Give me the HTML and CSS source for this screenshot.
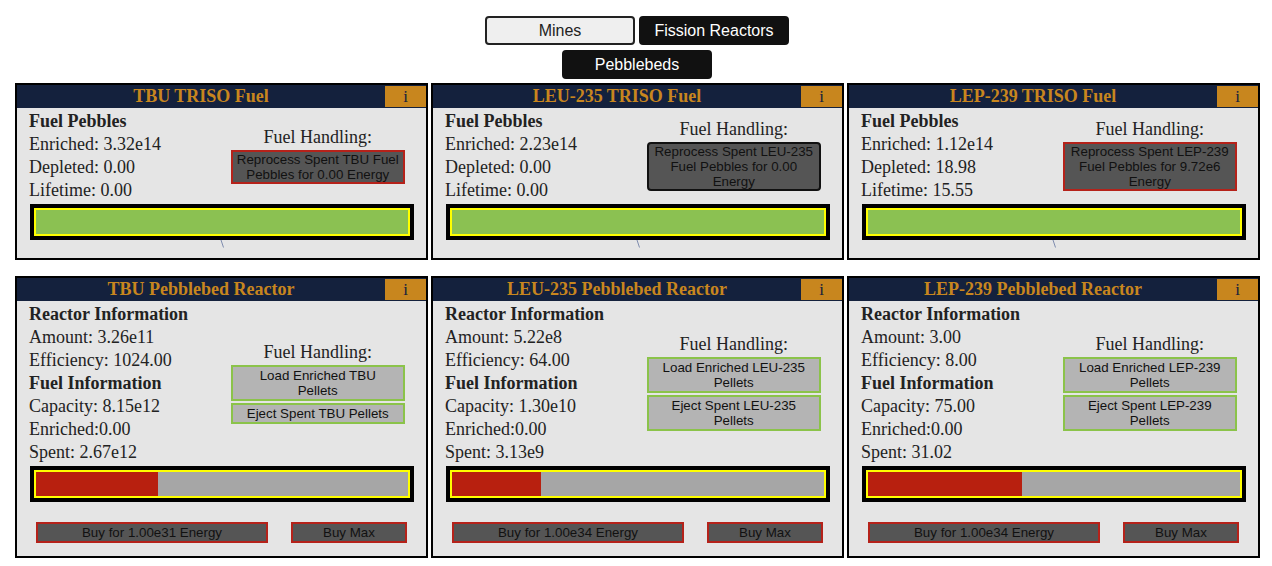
FILE: index.html
```html
<!DOCTYPE html>
<html>
<head>
<meta charset="utf-8">
<link rel="stylesheet" href="styles.css">
</head>
<body>
<div class="nav">
  <div class="nav-row">
    <button class="tab tab-light">Mines</button>
    <button class="tab tab-dark">Fission Reactors</button>
  </div>
  <div class="nav-row">
    <button class="tab tab-dark">Pebblebeds</button>
  </div>
</div>

<div class="row">
  <div class="card">
    <div class="card-head"><span class="card-title">TBU TRISO Fuel</span><span class="info">i</span></div>
    <div class="cols">
      <div class="stats">
        <div class="stat-head">Fuel Pebbles</div>
        <div>Enriched: 3.32e14</div>
        <div>Depleted: 0.00</div>
        <div>Lifetime: 0.00</div>
      </div>
      <div class="handling">
        <div class="handling-label">Fuel Handling:</div>
        <button class="btn btn-dark btn-red btn-wide">Reprocess Spent TBU Fuel Pebbles for 0.00 Energy</button>
      </div>
    </div>
    <div class="bar"><div class="fill fill-green" style="width:100%"></div></div>
    <div class="tick"><svg width="5" height="8" viewBox="0 0 5 8"><line x1="1" y1="0" x2="3.5" y2="7.5" stroke="#7f8cae" stroke-width="1"/></svg></div>
  </div>

  <div class="card">
    <div class="card-head"><span class="card-title">LEU-235 TRISO Fuel</span><span class="info">i</span></div>
    <div class="cols">
      <div class="stats">
        <div class="stat-head">Fuel Pebbles</div>
        <div>Enriched: 2.23e14</div>
        <div>Depleted: 0.00</div>
        <div>Lifetime: 0.00</div>
      </div>
      <div class="handling">
        <div class="handling-label">Fuel Handling:</div>
        <button class="btn btn-dark btn-black btn-wide">Reprocess Spent LEU-235 Fuel Pebbles for 0.00 Energy</button>
      </div>
    </div>
    <div class="bar"><div class="fill fill-green" style="width:100%"></div></div>
    <div class="tick"><svg width="5" height="8" viewBox="0 0 5 8"><line x1="1" y1="0" x2="3.5" y2="7.5" stroke="#7f8cae" stroke-width="1"/></svg></div>
  </div>

  <div class="card">
    <div class="card-head"><span class="card-title">LEP-239 TRISO Fuel</span><span class="info">i</span></div>
    <div class="cols">
      <div class="stats">
        <div class="stat-head">Fuel Pebbles</div>
        <div>Enriched: 1.12e14</div>
        <div>Depleted: 18.98</div>
        <div>Lifetime: 15.55</div>
      </div>
      <div class="handling">
        <div class="handling-label">Fuel Handling:</div>
        <button class="btn btn-dark btn-red btn-wide">Reprocess Spent LEP-239 Fuel Pebbles for 9.72e6 Energy</button>
      </div>
    </div>
    <div class="bar"><div class="fill fill-green" style="width:100%"></div></div>
    <div class="tick"><svg width="5" height="8" viewBox="0 0 5 8"><line x1="1" y1="0" x2="3.5" y2="7.5" stroke="#7f8cae" stroke-width="1"/></svg></div>
  </div>
</div>

<div class="row row-second">
  <div class="card">
    <div class="card-head"><span class="card-title">TBU Pebblebed Reactor</span><span class="info">i</span></div>
    <div class="cols">
      <div class="stats">
        <div class="stat-head">Reactor Information</div>
        <div>Amount: 3.26e11</div>
        <div>Efficiency: 1024.00</div>
        <div class="stat-head">Fuel Information</div>
        <div>Capacity: 8.15e12</div>
        <div>Enriched:0.00</div>
        <div>Spent: 2.67e12</div>
      </div>
      <div class="handling">
        <div class="handling-label">Fuel Handling:</div>
        <button class="btn btn-light">Load Enriched TBU Pellets</button>
        <button class="btn btn-light">Eject Spent TBU Pellets</button>
      </div>
    </div>
    <div class="bar"><div class="fill fill-red" style="width:32.8%"></div></div>
    <div class="buy-row">
      <button class="btn btn-dark btn-red btn-buy">Buy for 1.00e31 Energy</button>
      <button class="btn btn-dark btn-red btn-max">Buy Max</button>
    </div>
  </div>

  <div class="card">
    <div class="card-head"><span class="card-title">LEU-235 Pebblebed Reactor</span><span class="info">i</span></div>
    <div class="cols">
      <div class="stats">
        <div class="stat-head">Reactor Information</div>
        <div>Amount: 5.22e8</div>
        <div>Efficiency: 64.00</div>
        <div class="stat-head">Fuel Information</div>
        <div>Capacity: 1.30e10</div>
        <div>Enriched:0.00</div>
        <div>Spent: 3.13e9</div>
      </div>
      <div class="handling">
        <div class="handling-label">Fuel Handling:</div>
        <button class="btn btn-light">Load Enriched LEU-235 Pellets</button>
        <button class="btn btn-light">Eject Spent LEU-235 Pellets</button>
      </div>
    </div>
    <div class="bar"><div class="fill fill-red" style="width:24%"></div></div>
    <div class="buy-row">
      <button class="btn btn-dark btn-red btn-buy">Buy for 1.00e34 Energy</button>
      <button class="btn btn-dark btn-red btn-max">Buy Max</button>
    </div>
  </div>

  <div class="card">
    <div class="card-head"><span class="card-title">LEP-239 Pebblebed Reactor</span><span class="info">i</span></div>
    <div class="cols">
      <div class="stats">
        <div class="stat-head">Reactor Information</div>
        <div>Amount: 3.00</div>
        <div>Efficiency: 8.00</div>
        <div class="stat-head">Fuel Information</div>
        <div>Capacity: 75.00</div>
        <div>Enriched:0.00</div>
        <div>Spent: 31.02</div>
      </div>
      <div class="handling">
        <div class="handling-label">Fuel Handling:</div>
        <button class="btn btn-light">Load Enriched LEP-239 Pellets</button>
        <button class="btn btn-light">Eject Spent LEP-239 Pellets</button>
      </div>
    </div>
    <div class="bar"><div class="fill fill-red" style="width:41.4%"></div></div>
    <div class="buy-row">
      <button class="btn btn-dark btn-red btn-buy">Buy for 1.00e34 Energy</button>
      <button class="btn btn-dark btn-red btn-max">Buy Max</button>
    </div>
  </div>
</div>
</body>
</html>
```

FILE: styles.css
```css
* { box-sizing: border-box; }

body {
  margin: 8px;
  background: #ffffff;
  font-family: "Liberation Serif", "Times New Roman", serif;
  color: #222222;
}

.nav {
  display: flex;
  flex-direction: column;
  align-items: center;
  gap: 5px;
  padding-top: 8px;
  padding-left: 2px;
  margin-bottom: 4px;
}

.nav-row {
  display: flex;
  justify-content: center;
  gap: 4px;
}

.tab {
  width: 150px;
  height: 29px;
  border-radius: 4px;
  font-family: "Liberation Sans", Arial, sans-serif;
  font-size: 16px;
  padding: 0;
  margin: 0;
}

.tab-light {
  background: #efefef;
  color: #222222;
  border: 2px solid #222222;
}

.tab-dark {
  background: #111111;
  color: #ffffff;
  border: 2px solid #111111;
}

.row {
  display: flex;
  gap: 3px;
  padding-left: 7px;
}

.row-second {
  margin-top: 16px;
}

.card {
  width: 413px;
  border: 2px solid #000000;
  background: #e5e5e5;
  display: flex;
  flex-direction: column;
}

.card-head {
  display: flex;
  align-items: center;
  height: 23px;
  background: #14213d;
}

.card-title {
  flex: 1;
  text-align: center;
  color: #c8861e;
  font-weight: bold;
  font-size: 18px;
  line-height: 23px;
}

.info {
  width: 41px;
  height: 21px;
  background: #c8861e;
  color: #14213d;
  font-size: 17px;
  line-height: 21px;
  text-align: center;
}

.cols {
  display: flex;
  align-items: center;
  padding: 0 12px;
}

.stats {
  flex: 1;
  padding-top: 2px;
  font-size: 18px;
  line-height: 23px;
  color: #222222;
}

.stat-head {
  font-weight: bold;
}

.handling {
  flex: 1;
  display: flex;
  flex-direction: column;
  align-items: center;
  gap: 2px;
}

.handling-label {
  font-size: 18px;
  line-height: 21px;
  color: #222222;
}

.btn {
  font-family: "Liberation Sans", Arial, sans-serif;
  font-size: 13.333px;
  line-height: 15px;
  color: #111111;
  margin: 0;
  text-align: center;
}

.btn-wide {
  width: 174px;
  padding: 0 2px;
}

.btn-dark {
  background: #555555;
}

.btn-red {
  border: 2px solid #b5221a;
}

.btn-black {
  border: 2px solid #111111;
  border-radius: 4px;
}

.btn-light {
  width: 174px;
  padding: 1px 6px;
  background: #b4b4b4;
  border: 2px solid #8bc34a;
}

.bar {
  width: 384px;
  height: 36px;
  margin: 2px auto 0;
  border: 4px solid #000000;
  background: #a6a6a6;
  box-shadow: inset 0 0 0 2px #ffff00;
  padding: 2px;
  display: flex;
}

.fill {
  height: 100%;
}

.fill-green {
  background: #8bc152;
}

.fill-red {
  background: #b8200f;
}

.tick {
  height: 18px;
  display: flex;
  justify-content: center;
}

.tick svg {
  display: block;
  margin-left: 1px;
}

.buy-row {
  display: flex;
  justify-content: space-between;
  padding: 0 19px;
  margin-top: 20px;
  margin-bottom: 13px;
}

.btn-buy {
  width: 232px;
  height: 21px;
  padding: 0;
}

.btn-max {
  width: 116px;
  height: 21px;
  padding: 0;
}
```
